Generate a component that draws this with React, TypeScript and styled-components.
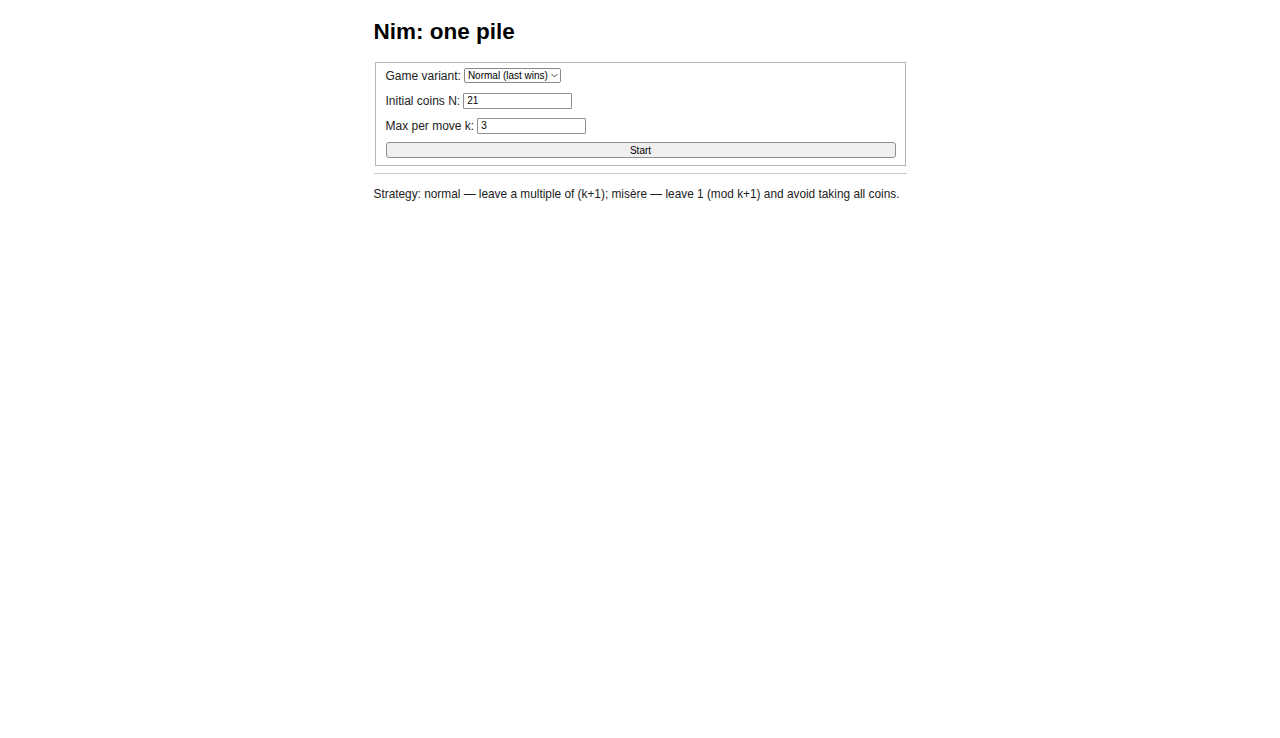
import React from "react";
import styled, { createGlobalStyle } from "styled-components";

const Global = createGlobalStyle`
  html, body { margin: 0; padding: 0; background: #fff; }
  body { font-family: "Liberation Sans", Arial, Helvetica, sans-serif; color: #222; }
`;

const Page = styled.div`
  width: 533px;
  margin: 0 auto;
  padding-top: 19px;
`;

const Title = styled.h1`
  margin: 0 0 17px;
  font-size: 22.5px;
  line-height: 26px;
  font-weight: 700;
  color: #000;
`;

const Panel = styled.fieldset`
  margin: 0 1px;
  padding: 4px 9px 7px 10px;
  border: 1px solid #b5b5b5;
  display: flex;
  flex-direction: column;
  gap: 8px;
  min-width: 0;
`;

const Row = styled.div`
  display: flex;
  align-items: center;
  height: 17px;
  gap: 3px;
  font-size: 12px;
`;

const Label = styled.label`
  font-size: 12px;
  color: #222;
`;

const SelectWrap = styled.span`
  position: relative;
  display: inline-flex;
`;

const Select = styled.select`
  appearance: none;
  -webkit-appearance: none;
  width: 97px;
  height: 15px;
  padding: 0 12px 0 3px;
  font: 10px "Liberation Sans", Arial, sans-serif;
  color: #000;
  background: #fff;
  border: 1px solid #8a8a8a;
  border-radius: 2px;
  box-sizing: border-box;
`;

const Chevron = styled.svg`
  position: absolute;
  right: 3px;
  top: 5px;
  width: 7px;
  height: 5px;
  pointer-events: none;
`;

const TextInput = styled.input`
  width: 109px;
  height: 16px;
  box-sizing: border-box;
  padding: 0 3px;
  font: 10px "Liberation Sans", Arial, sans-serif;
  color: #000;
  border: 1px solid #8f8f8f;
  border-radius: 1px;
  outline: none;
`;

const StartButton = styled.button`
  width: 100%;
  height: 16px;
  box-sizing: border-box;
  padding: 0;
  font: 10px "Liberation Sans", Arial, sans-serif;
  color: #000;
  background: #efefef;
  border: 1px solid #8f8f8f;
  border-radius: 3px;
`;

const ButtonRow = styled.div`
  display: flex;
  height: 16px;
`;

const Rule = styled.hr`
  margin: 7px 0 0;
  border: 0;
  border-top: 1px solid #c8c8c8;
  height: 0;
`;

const Strategy = styled.p`
  margin: 13px 0 0;
  font-size: 11.85px;
  line-height: 15px;
  white-space: nowrap;
  color: #222;
`;

export default function App() {
  return (
    <>
      <Global />
      <Page>
        <Title>Nim: one pile</Title>
        <Panel>
          <Row>
            <Label htmlFor="variant">Game variant:</Label>
            <SelectWrap>
              <Select id="variant" defaultValue="normal">
                <option value="normal">Normal (last wins)</option>
                <option value="misere">Misère (last loses)</option>
              </Select>
              <Chevron viewBox="0 0 7 5">
                <path d="M0.5 1 L3.5 4 L6.5 1" fill="none" stroke="#333" strokeWidth="0.9" />
              </Chevron>
            </SelectWrap>
          </Row>
          <Row>
            <Label htmlFor="n">Initial coins N:</Label>
            <TextInput id="n" type="text" defaultValue="21" />
          </Row>
          <Row>
            <Label htmlFor="k">Max per move k:</Label>
            <TextInput id="k" type="text" defaultValue="3" />
          </Row>
          <ButtonRow>
            <StartButton>Start</StartButton>
          </ButtonRow>
        </Panel>
        <Rule />
        <Strategy>
          Strategy: normal — leave a multiple of (k+1); misère — leave 1 (mod k+1) and avoid taking all coins.
        </Strategy>
      </Page>
    </>
  );
}
